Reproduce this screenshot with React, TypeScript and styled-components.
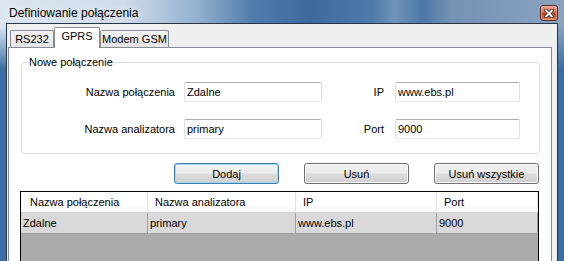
import React from 'react';
import styled, { createGlobalStyle } from 'styled-components';

const GlobalStyle = createGlobalStyle`
  html, body {
    margin: 0;
    padding: 0;
    background: #7e9aba;
  }
  body {
    font-family: "Liberation Sans", Arial, sans-serif;
    font-size: 11px;
    color: #000;
  }
`;

const Window = styled.div`
  width: 564px;
  height: 261px;
  overflow: hidden;
  display: flex;
  flex-direction: column;
  box-sizing: border-box;
  background:
    linear-gradient(180deg, rgba(58, 108, 162, 0) 0, rgba(58, 108, 162, 0) 26px, #3b6ca2 70px),
    linear-gradient(
      90deg,
      #dbe6f2 0%,
      #d0dcea 22%,
      #93b0cf 35%,
      #4f7cab 45%,
      #3b6a9d 55%,
      #4f7bab 66%,
      #7093b9 70%,
      #4c78a7 75%,
      #7592b4 80%,
      #8aa3bf 100%
    );
`;

const TitleBar = styled.div`
  height: 23px;
  flex: none;
  display: flex;
  justify-content: space-between;
  align-items: flex-start;
  padding: 0 6px 0 9px;
`;

const Title = styled.span`
  font-size: 12px;
  line-height: 14px;
  margin-top: 6px;
  text-shadow: 0 0 6px rgba(255, 255, 255, 0.9);
`;

const CloseButton = styled.div`
  margin-top: 5px;
  width: 18px;
  height: 16px;
  box-sizing: border-box;
  border: 1px solid #5a2a1e;
  border-radius: 3px;
  background: linear-gradient(#eaa48f 0%, #d9694b 48%, #c83f1f 52%, #d9765a 100%);
  box-shadow: inset 0 0 0 1px rgba(255, 200, 180, 0.5);
  display: flex;
  align-items: center;
  justify-content: center;
`;

const Client = styled.div`
  flex: 1;
  margin: 0 6px;
  border: 1px solid #26364a;
  border-bottom: none;
  background: #f0f0f0;
  padding: 3px 0 0 1px;
  display: flex;
  flex-direction: column;
`;

const TabControl = styled.div`
  width: 544px;
  flex: 1;
  display: flex;
  flex-direction: column;
`;

const TabStrip = styled.div`
  height: 20px;
  display: flex;
  align-items: flex-end;
  padding-left: 2px;
`;

const Tab = styled.div<{ $active?: boolean; $w: number }>`
  box-sizing: border-box;
  width: ${(p) => p.$w}px;
  height: ${(p) => (p.$active ? 21 : 17)}px;
  margin-bottom: ${(p) => (p.$active ? -1 : 0)}px;
  position: relative;
  z-index: ${(p) => (p.$active ? 1 : 0)};
  border: 1px solid #898c95;
  border-bottom: none;
  border-radius: 2px 2px 0 0;
  background: ${(p) => (p.$active ? '#fff' : 'linear-gradient(#f3f3f3, #e4e4e4)')};
  display: flex;
  align-items: center;
  justify-content: center;
  padding-bottom: ${(p) => (p.$active ? 5 : 0)}px;
  font-size: 11px;
`;

const TabPage = styled.div`
  flex: 1;
  border: 1px solid #898c95;
  border-bottom: none;
  background: #fff;
`;

const GroupBox = styled.fieldset`
  margin: 7px 0 0 12px;
  width: 519px;
  box-sizing: border-box;
  min-width: 0;
  padding: 0 0 14px 0;
  border: 1px solid #d5dfe5;
  border-radius: 3px;
`;

const GroupTitle = styled.legend`
  margin-left: 5px;
  padding: 0 2px;
  line-height: 14px;
  font-size: 11px;
`;

const FormGrid = styled.div`
  display: grid;
  grid-template-columns: 162px 138px 73px 125px;
  grid-auto-rows: 20px;
  row-gap: 17px;
  padding-top: 13px;
  align-items: center;
`;

const FieldLabel = styled.label<{ $gap: number }>`
  text-align: right;
  padding-right: ${(p) => p.$gap}px;
  white-space: nowrap;
`;

const TextBox = styled.input`
  box-sizing: border-box;
  width: 100%;
  height: 20px;
  margin: 0;
  padding: 0 2px;
  border: 1px solid;
  border-color: #abadb3 #dbdfe6 #e3e9ef #e2e3ea;
  border-radius: 2px;
  background: #fff;
  font-family: "Liberation Sans", Arial, sans-serif;
  font-size: 11px;
  color: #000;
  outline: none;
`;

const ButtonRow = styled.div`
  display: flex;
  justify-content: space-between;
  width: 365px;
  margin: 9px 0 0 165px;
`;

const Button = styled.button<{ $default?: boolean }>`
  width: 105px;
  height: 21px;
  padding: 0;
  box-sizing: border-box;
  border: 1px solid ${(p) => (p.$default ? '#3c7fb1' : '#707070')};
  border-radius: 3px;
  background: linear-gradient(#f2f2f2 0%, #ebebeb 48%, #dddddd 52%, #cfcfcf 100%);
  box-shadow: inset 0 0 0 1px ${(p) => (p.$default ? '#9fd8f2' : '#fbfbfb')};
  font-family: "Liberation Sans", Arial, sans-serif;
  font-size: 11px;
  color: #000;
`;

const Grid = styled.div`
  margin: 7px 0 0 11px;
  width: 519px;
  height: 90px;
  box-sizing: border-box;
  border: 1px solid #000;
  background: #ababab;
`;

const GridRow = styled.div<{ $header?: boolean }>`
  display: grid;
  grid-template-columns: 127px 148px 141px 1fr;
  height: ${(p) => (p.$header ? 21 : 21)}px;
  box-sizing: border-box;
  border-bottom: 1px solid ${(p) => (p.$header ? '#d5d5d5' : '#a0a0a0')};
  background: ${(p) => (p.$header ? 'linear-gradient(#ffffff 0%, #ffffff 55%, #f6f7f9 100%)' : '#d9d9d9')};
`;

const Cell = styled.div<{ $header?: boolean; $pad: number }>`
  box-sizing: border-box;
  border-right: 1px solid ${(p) => (p.$header ? '#e2e2e2' : '#a0a0a0')};
  padding-left: ${(p) => p.$pad}px;
  display: flex;
  align-items: center;
  white-space: nowrap;
  overflow: hidden;
`;

const columns = ['Nazwa połączenia', 'Nazwa analizatora', 'IP', 'Port'];
const rows = [['Zdalne', 'primary', 'www.ebs.pl', '9000']];

export default function App() {
  return (
    <>
      <GlobalStyle />
      <Window>
        <TitleBar>
          <Title>Definiowanie połączenia</Title>
          <CloseButton>
            <svg width="10" height="9" viewBox="0 0 10 9">
              <path d="M2 1.5 L8 7.5 M8 1.5 L2 7.5" stroke="#3a2a28" strokeWidth="3.6" strokeLinecap="square" />
              <path d="M2 1.5 L8 7.5 M8 1.5 L2 7.5" stroke="#fff" strokeWidth="1.8" strokeLinecap="square" />
            </svg>
          </CloseButton>
        </TitleBar>
        <Client>
          <TabControl>
            <TabStrip>
              <Tab $w={44}>RS232</Tab>
              <Tab $w={46} $active>
                GPRS
              </Tab>
              <Tab $w={69}>Modem GSM</Tab>
            </TabStrip>
            <TabPage>
              <GroupBox>
                <GroupTitle>Nowe połączenie</GroupTitle>
                <FormGrid>
                  <FieldLabel $gap={9}>Nazwa połączenia</FieldLabel>
                  <TextBox defaultValue="Zdalne" />
                  <FieldLabel $gap={11}>IP</FieldLabel>
                  <TextBox defaultValue="www.ebs.pl" />
                  <FieldLabel $gap={9}>Nazwa analizatora</FieldLabel>
                  <TextBox defaultValue="primary" />
                  <FieldLabel $gap={11}>Port</FieldLabel>
                  <TextBox defaultValue="9000" />
                </FormGrid>
              </GroupBox>
              <ButtonRow>
                <Button $default>Dodaj</Button>
                <Button>Usuń</Button>
                <Button>Usuń wszystkie</Button>
              </ButtonRow>
              <Grid>
                <GridRow $header>
                  {columns.map((c, i) => (
                    <Cell key={c} $header $pad={i === 0 ? 9 : 7}>
                      {c}
                    </Cell>
                  ))}
                </GridRow>
                {rows.map((r) => (
                  <GridRow key={r[0]}>
                    {r.map((v, i) => (
                      <Cell key={i} $pad={2}>
                        {v}
                      </Cell>
                    ))}
                  </GridRow>
                ))}
              </Grid>
            </TabPage>
          </TabControl>
        </Client>
      </Window>
    </>
  );
}
